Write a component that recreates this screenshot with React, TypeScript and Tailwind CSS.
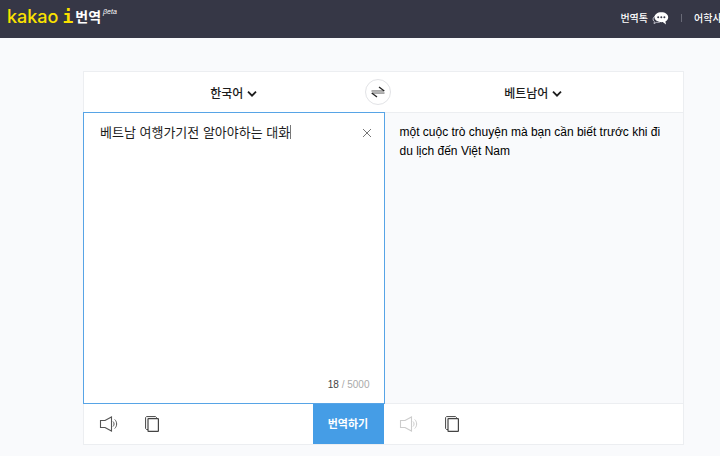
import { useState } from 'react'

const RESULT = 'một cuộc trò chuyện mà bạn cần biết trước khi đi du lịch đến Việt Nam'

function ChevronIcon() {
  return (
    <svg width="10" height="8" viewBox="0 0 10 8" fill="none" stroke="#1c1c1c" strokeWidth="1.8" aria-hidden="true">
      <path d="M1 1.7l4 4 4-4" />
    </svg>
  )
}

function SwapIcon() {
  return (
    <svg width="14" height="12" viewBox="0 0 14 12" fill="none" aria-hidden="true">
      <path d="M0.5 5H13" stroke="#555" />
      <path d="M8 0.9L13.300 5" stroke="#222" strokeWidth="1.300" />
      <path d="M1 7H13.500" stroke="#555" />
      <path d="M0.700 7L6 11.100" stroke="#222" strokeWidth="1.300" />
      <path d="M1 6H13" stroke="#bbb" />
    </svg>
  )
}

function SpeakerIcon() {
  return (
    <svg width="20" height="16" viewBox="0 0 20 16" fill="none" stroke="currentColor" aria-hidden="true">
      <path d="M1.500 4.500H6L12.500 1v14L6 11.500H1.500z" strokeWidth="1.1" />
      <path d="M14 5.500c1.400 1.400 1.400 3.600 0 5M15.700 3.500c2.600 2.500 2.600 6.500 0 9" strokeWidth="1" />
    </svg>
  )
}

function CopyIcon() {
  return (
    <svg width="14" height="16" viewBox="0 0 14 16" fill="none" stroke="#444" aria-hidden="true">
      <path d="M3 13.500H1.500L0.600 12.500V1.500L1.500 0.600H10.500L11.500 1.500V2.500" strokeWidth="1" />
      <rect x="3" y="2.600" width="10.400" height="12.800" rx="0.500" strokeWidth="1.200" />
    </svg>
  )
}

function TalkIcon() {
  return (
    <svg width="17" height="13" viewBox="0 0 17 13" fill="none" aria-hidden="true">
      <path d="M3.500 4C1.500 5 0.700 6.500 1.200 8c.2.700.6 1.200 1.200 1.600L2 11.600l2.300-1.200c1.500.3 3 .1 4-.6" stroke="#c9c9d2" strokeWidth="0.900" />
      <path d="M9.300 0.300c4 0 6.900 2.100 6.900 5 0 1.900-1.100 3.300-2.800 4.100l.6 3-3.300-2.300c-4.500.3-8.200-1.700-8.200-4.800C2.500 2.400 5.400.3 9.300.3z" fill="#fff" />
      <g fill="#363746">
        <circle cx="6.200" cy="5.200" r="1" />
        <circle cx="9.300" cy="5.200" r="1" />
        <circle cx="12.400" cy="5.200" r="1" />
      </g>
    </svg>
  )
}

function Header() {
  return (
    <header className="flex h-[38px] items-center overflow-hidden bg-[#363746] pl-[7px] text-white">
      <a href="/" className="flex items-center whitespace-nowrap pb-1">
        <span className="flex gap-1 text-lg leading-5 text-[#fae100]">
          <span className="font-['Inter',sans-serif] font-medium">kakao</span>
          <span className="font-['DejaVu_Sans_Mono',monospace] font-bold">i</span>
        </span>
        <span className="ml-0.5 text-sm font-bold">번역</span>
        <sup className="ml-0.5 pb-1 font-['Liberation_Sans',sans-serif] text-[7px] italic">βeta</sup>
      </a>
      <nav className="ml-auto flex items-center whitespace-nowrap pb-0.5 text-[10px] font-medium">
        <a href="/talk" className="flex items-center gap-1">
          번역톡
          <TalkIcon />
        </a>
        <span className="mx-3 h-2 w-px bg-[#696a77]" />
        <a href="/dic" className="w-[26px] overflow-hidden">어학사전</a>
      </nav>
    </header>
  )
}

export default function App() {
  const [text, setText] = useState('베트남 여행가기전 알아야하는 대화')

  return (
    <div className="min-h-screen bg-[#f9fafc] font-['Liberation_Sans','Noto_Sans_CJK_KR',sans-serif] text-[#1c1c1c]">
      <Header />
      <main className="pt-[33px] pr-9 pb-3 pl-[83px]">
        <div className="border border-[#eceef1] bg-white">
          <div className="relative grid h-10 grid-cols-2 text-xs font-medium">
            <button type="button" className="flex items-center justify-center gap-1 pt-[3px]">
              한국어
              <ChevronIcon />
            </button>
            <button type="button" className="flex items-center justify-center gap-1 pt-[3px]">
              베트남어
              <ChevronIcon />
            </button>
            <button
              type="button"
              aria-label="언어 바꾸기"
              className="absolute top-[7px] left-1/2 flex size-[26px] -translate-x-[19px] items-center justify-center rounded-full border border-[#e2e3e6] bg-white"
            >
              <SwapIcon />
            </button>
          </div>

          <div className="grid h-[292px] grid-cols-2">
            <div className="relative -mr-px -ml-px flex flex-col border border-[#57a4e6]">
              <div className="flex flex-1 items-start pt-2.5 pr-3 pl-4">
                <textarea
                  aria-label="번역할 내용"
                  value={text}
                  onChange={(e) => setText(e.target.value)}
                  className="h-full flex-1 resize-none bg-transparent text-[13px] leading-[19px] outline-none"
                />
                <button type="button" aria-label="지우기" onClick={() => setText('')} className="mt-[5px]">
                  <svg width="10" height="10" viewBox="0 0 10 10" stroke="#777" aria-hidden="true">
                    <path d="M1 1l8 8M9 1l-8 8" />
                  </svg>
                </button>
              </div>
              <span className="absolute top-3 left-[206px] h-[14px] w-px bg-[#777]" />
              <p className="pr-3.5 pb-3 text-right text-[10px] leading-3 text-[#aaa]">
                <span className="text-[#444]">{text.length}</span> / 5000
              </p>
            </div>
            <div className="border-y border-[#eceef1] bg-[#f9fafc] px-4 pt-2.5">
              <p className="text-xs leading-[19px] text-black">{RESULT}</p>
            </div>
          </div>

          <div className="grid h-10 grid-cols-2">
            <div className="flex items-center pl-[15px]">
              <button type="button" aria-label="듣기" className="text-[#555]">
                <SpeakerIcon />
              </button>
              <button type="button" aria-label="복사" className="ml-[26px]">
                <CopyIcon />
              </button>
              <button type="button" className="ml-auto h-full w-[71px] bg-[#459de6] text-[11px] font-bold text-white">
                번역하기
              </button>
            </div>
            <div className="flex items-center pl-[15px]">
              <button type="button" aria-label="번역 듣기" className="text-[#ccc]">
                <SpeakerIcon />
              </button>
              <button type="button" aria-label="번역 복사" className="ml-[26px]">
                <CopyIcon />
              </button>
            </div>
          </div>
        </div>
      </main>
    </div>
  )
}
